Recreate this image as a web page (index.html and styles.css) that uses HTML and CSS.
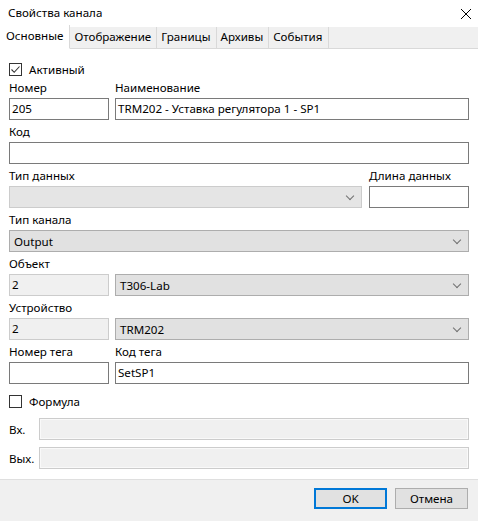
FILE: index.html
```html
<!DOCTYPE html>
<html>
<head>
<meta charset="utf-8">
<link rel="stylesheet" href="styles.css">
</head>
<body>
<div class="dialog">
  <div class="titlebar">
    <span class="title">Свойства канала</span>
    <svg class="close" width="12" height="12" viewBox="0 0 12 12"><path d="M1 1L11 11M11 1L1 11" stroke="#000" stroke-width="1" fill="none"/></svg>
  </div>
  <div class="tabs">
    <div class="tab active">Основные</div>
    <div class="tab">Отображение</div>
    <div class="tab">Границы</div>
    <div class="tab">Архивы</div>
    <div class="tab">События</div>
  </div>
  <div class="content">
    <label class="check-row">
      <span class="checkbox"><svg width="11" height="11" viewBox="0 0 11 11"><path d="M1.5 5.5L4.2 8.3L9.5 2.5" stroke="#333" stroke-width="1.1" fill="none"/></svg></span>
      <span>Активный</span>
    </label>

    <div class="row">
      <div class="col narrow"><div class="lbl">Номер</div><div class="input">205</div></div>
      <div class="col wide"><div class="lbl">Наименование</div><div class="input">TRM202 - Уставка регулятора 1 - SP1</div></div>
    </div>

    <div class="row">
      <div class="col full"><div class="lbl">Код</div><div class="input"></div></div>
    </div>

    <div class="row gap7">
      <div class="col full"><div class="lbl">Тип данных</div><div class="select disabled"><span></span><i class="chev"></i></div></div>
      <div class="col narrow"><div class="lbl">Длина данных</div><div class="input"></div></div>
    </div>

    <div class="row">
      <div class="col full"><div class="lbl">Тип канала</div><div class="select"><span>Output</span><i class="chev"></i></div></div>
    </div>

    <div class="row">
      <div class="col narrow"><div class="lbl">Объект</div><div class="input ro">2</div></div>
      <div class="col wide"><div class="lbl">&nbsp;</div><div class="select"><span>T306-Lab</span><i class="chev"></i></div></div>
    </div>

    <div class="row">
      <div class="col narrow"><div class="lbl">Устройство</div><div class="input ro">2</div></div>
      <div class="col wide"><div class="lbl">&nbsp;</div><div class="select"><span>TRM202</span><i class="chev"></i></div></div>
    </div>

    <div class="row">
      <div class="col narrow"><div class="lbl">Номер тега</div><div class="input"></div></div>
      <div class="col wide"><div class="lbl">Код тега</div><div class="input">SetSP1</div></div>
    </div>

    <label class="check-row formula">
      <span class="checkbox"></span>
      <span>Формула</span>
    </label>

    <div class="frow"><span class="flbl">Вх.</span><div class="input off"></div></div>
    <div class="frow"><span class="flbl">Вых.</span><div class="input off"></div></div>
  </div>
  <div class="footer">
    <div class="btn primary">OK</div>
    <div class="btn">Отмена</div>
  </div>
</div>
</body>
</html>
```

FILE: styles.css
```css
* { box-sizing: border-box; }
html, body { margin: 0; padding: 0; }
body {
  font-family: "Noto Sans", "Open Sans", sans-serif;
  font-size: 11.6px;
  color: #000;
  background: #fff;
}
.dialog {
  width: 478px;
  height: 521px;
  display: flex;
  flex-direction: column;
  background: #fff;
}
.titlebar {
  height: 25px;
  display: flex;
  align-items: center;
  justify-content: space-between;
  padding: 0 6px 0 8px;
}
.title { line-height: 16px; }
.close { margin-top: 2px; }
.tabs {
  height: 24px;
  display: flex;
  align-items: flex-end;
  background: #fff;
  position: relative;
}
.tabs::before {
  content: "";
  position: absolute;
  left: 0; right: 0; top: 2px; bottom: 0;
  background: #f0f0f0;
  border-bottom: 1px solid #d9d9d9;
}
.tab {
  position: relative;
  height: 22px;
  line-height: 20px;
  padding: 0 5px 0 4px;
  border-right: 1px solid #d9d9d9;
  background: #f0f0f0;
  border-bottom: 1px solid #d9d9d9;
  white-space: nowrap;
}
.tab.active {
  height: 24px;
  line-height: 22px;
  background: #fff;
  border-bottom: 1px solid #fff;
  padding: 0 6px 0 6px;
}
.content {
  flex: 1;
  padding: 0 9px 0 9px;
  display: flex;
  flex-direction: column;
}
.check-row {
  display: flex;
  align-items: center;
  height: 14px;
  margin-top: 13px;
  gap: 7px;
}
.checkbox {
  width: 13px;
  height: 13px;
  border: 1px solid #333;
  display: flex;
  align-items: center;
  justify-content: center;
  background: #fff;
}
.row {
  display: flex;
  gap: 6px;
}
.row.gap7 { gap: 7px; }
.col { display: flex; flex-direction: column; }
.narrow { width: 100px; flex: none; }
.wide { flex: 1; }
.full { flex: 1; }
.lbl {
  height: 22px;
  padding-top: 4px;
  line-height: 16px;
  white-space: nowrap;
}
.input {
  height: 22px;
  border: 1px solid #7a7a7a;
  background: #fff;
  padding: 0 2px;
  line-height: 20px;
  white-space: nowrap;
  overflow: hidden;
}
.input.ro {
  background: #f0f0f0;
  border-color: #cccccc;
}
.input.off {
  background: #f0f0f0;
  border-color: #cccccc;
  box-shadow: inset 0 0 0 1px #f9f9f9;
}
.select {
  height: 22px;
  border: 1px solid #adadad;
  background: #e1e1e1;
  display: flex;
  align-items: center;
  justify-content: space-between;
  padding: 0 6px 0 4px;
}
.select.disabled {
  background: #e5e5e5;
  border-color: #cccccc;
}
.chev {
  width: 6px;
  height: 6px;
  border-right: 1px solid #707070;
  border-bottom: 1px solid #707070;
  transform: rotate(45deg);
  margin-top: -3px;
  margin-right: 2px;
}
.check-row.formula { margin-top: 10px; }
.frow {
  display: flex;
  align-items: center;
  margin-top: 10px;
}
.frow + .frow { margin-top: 7px; }
.frow .flbl { width: 30px; flex: none; }
.frow .input { flex: 1; }
.footer {
  height: 42px;
  background: #f0f0f0;
  border-top: 1px solid #dfdfdf;
  display: flex;
  justify-content: flex-end;
  align-items: flex-start;
  padding: 8px 10px 0 0;
  gap: 8px;
}
.btn {
  width: 73px;
  height: 21px;
  border: 1px solid #adadad;
  background: #e1e1e1;
  text-align: center;
  line-height: 19px;
}
.btn.primary {
  border: 2px solid #0078d7;
  line-height: 17px;
}
```
